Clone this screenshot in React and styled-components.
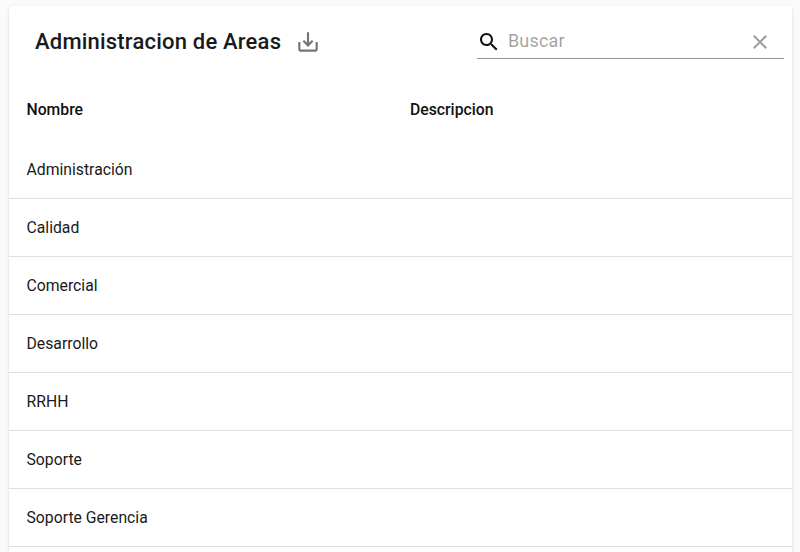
import React from "react"
import styled, { createGlobalStyle } from "styled-components"

const GlobalStyle = createGlobalStyle`
  html, body {
    margin: 0;
    height: 100%;
    overflow: hidden;
    background: #fafafa;
    font-family: Roboto, "Liberation Sans", sans-serif;
  }
`

const areas = ["Administración", "Calidad", "Comercial", "Desarrollo", "RRHH", "Soporte", "Soporte Gerencia"]

const App = () => (
  <>
    <GlobalStyle />
    <Page>
      <Card>
        <Toolbar>
          <TitleGroup>
            <Title>Administracion de Areas</Title>
            <ExportButton aria-label="Exportar">
              <svg width="26" height="26" viewBox="0 0 24 24" fill="currentColor">
                <path d="M19 12v7H5v-7H3v7c0 1.1.9 2 2 2h14c1.1 0 2-.9 2-2v-7h-2zm-6 .67l2.59-2.58L17 11.5l-5 5-5-5 1.41-1.41L11 12.67V3h2v9.67z" />
              </svg>
            </ExportButton>
          </TitleGroup>
          <Search>
            <SearchIcon width="24" height="24" viewBox="0 0 24 24" fill="currentColor">
              <path d="M15.5 14h-.79l-.28-.27C15.41 12.59 16 11.11 16 9.5 16 5.91 13.09 3 9.5 3S3 5.91 3 9.5 5.91 16 9.5 16c1.61 0 3.09-.59 4.23-1.57l.27.28v.79l5 4.99L20.49 19l-4.99-5zm-6 0C7.01 14 5 11.99 5 9.5S7.01 5 9.5 5 14 7.01 14 9.5 11.99 14 9.5 14z" />
            </SearchIcon>
            <SearchInput placeholder="Buscar" />
            <ClearIcon width="24" height="24" viewBox="0 0 24 24" fill="currentColor">
              <path d="M19 6.41L17.59 5 12 10.59 6.41 5 5 6.41 10.59 12 5 17.59 6.41 19 12 13.41 17.59 19 19 17.59 13.41 12z" />
            </ClearIcon>
          </Search>
        </Toolbar>
        <Table>
          <thead>
            <tr>
              <NameHead>Nombre</NameHead>
              <HeadCell>Descripcion</HeadCell>
            </tr>
          </thead>
          <tbody>
            {areas.map((area) => (
              <tr key={area}>
                <BodyCell>{area}</BodyCell>
                <BodyCell />
              </tr>
            ))}
          </tbody>
        </Table>
      </Card>
    </Page>
  </>
)

export default App

const Page = styled.div`
  height: 552px;
  overflow: hidden;
  padding: 6px 8px 0 9px;
  box-sizing: border-box;
`
const Card = styled.div`
  background: #fff;
  border-radius: 4px;
  min-height: 560px;
  box-shadow: 0 2px 1px -1px rgba(0, 0, 0, 0.2), 0 1px 1px 0 rgba(0, 0, 0, 0.14), 0 1px 3px 0 rgba(0, 0, 0, 0.12);
`
const Toolbar = styled.div`
  height: 72px;
  box-sizing: border-box;
  padding: 0 8px 2px 26px;
  display: flex;
  align-items: center;
  justify-content: space-between;
  color: rgba(0, 0, 0, 0.87);
`
const TitleGroup = styled.div`
  display: flex;
  align-items: center;
  gap: 14px;
`
const Title = styled.h6`
  margin: 2px 0 0;
  font-size: 22px;
  font-weight: 500;
  line-height: 1.6;
  letter-spacing: 0.2px;
  color: #1a1a1a;
`
const ExportButton = styled.div`
  display: flex;
  margin-top: 2px;
  color: rgba(0, 0, 0, 0.54);
  width: 26px;
  height: 26px;
`
const Search = styled.div`
  width: 307px;
  height: 32px;
  margin-top: 3px;
  display: flex;
  align-items: center;
  border-bottom: 1px solid #949494;
`
const SearchIcon = styled.svg`
  color: #111;
  flex: none;
`
const SearchInput = styled.input`
  flex: 1;
  min-width: 0;
  margin: 0 0 3px 7px;
  padding: 0;
  border: 0;
  outline: 0;
  background: none;
  font: 400 18px Roboto, sans-serif;
  letter-spacing: 0.15px;
  color: rgba(0, 0, 0, 0.87);
  &::placeholder {
    color: rgba(0, 0, 0, 0.38);
    opacity: 1;
  }
`
const ClearIcon = styled.svg`
  color: rgba(0, 0, 0, 0.38);
  flex: none;
  margin-right: 12px;
`
const Table = styled.table`
  width: 100%;
  border-collapse: collapse;
  table-layout: fixed;
`
const HeadCell = styled.th`
  height: 62px;
  padding: 0 17.5px 1px;
  text-align: left;
  font-size: 15.75px;
  font-weight: 500;
  color: #111;
`
const NameHead = styled(HeadCell)`
  width: 383.5px;
  box-sizing: border-box;
`
const BodyCell = styled.td`
  height: 57px;
  padding: 0 17.5px;
  font-size: 15.75px;
  color: #1a1a1a;
  border-bottom: 1px solid #e0e0e0;
`
